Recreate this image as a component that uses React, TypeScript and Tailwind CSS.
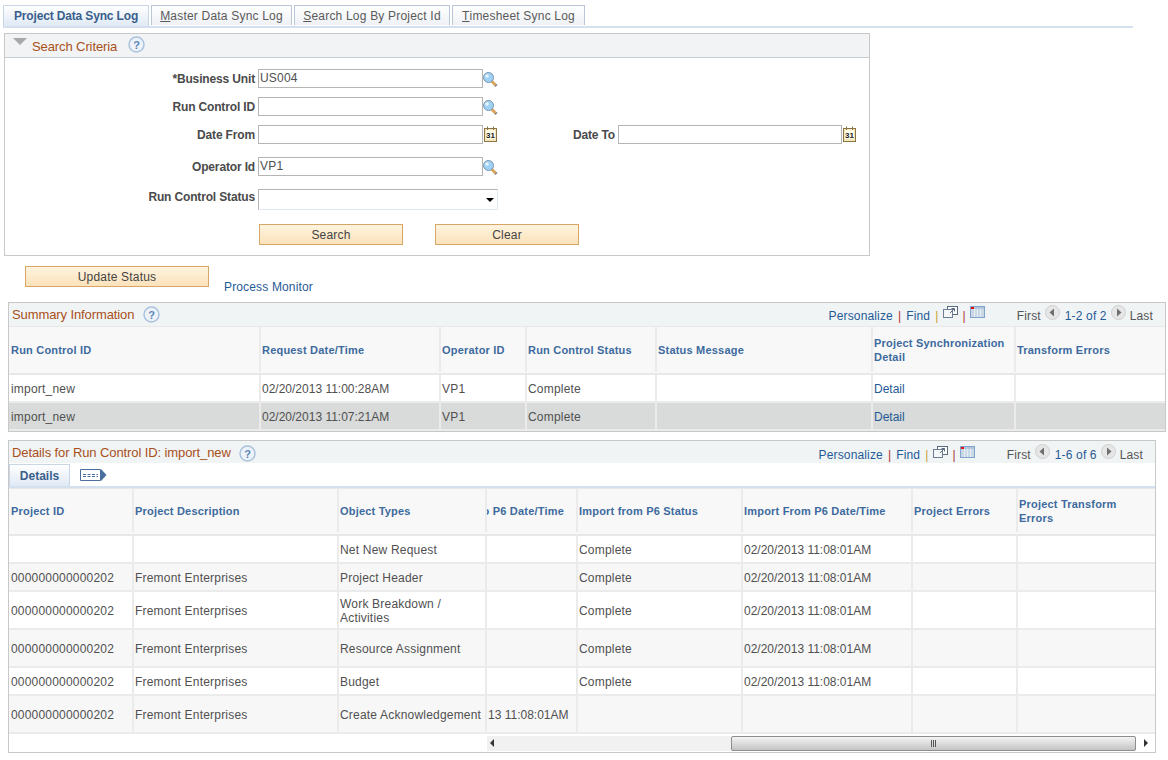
import React from "react";

const label = "text-[12px] font-bold text-[#4a4a4a] text-right tracking-[-0.15px] whitespace-nowrap";
const link = "text-[#1f5a96]";
const headCell = "flex items-center px-[1px] first:pl-[2px] text-[11px] leading-[14px] font-bold text-[#3d6a9e] tracking-[0.2px] border-r-2 border-[#ebebeb] last:border-r-0 overflow-hidden";
const bodyCell = "flex items-center px-[1px] pt-[2px] first:pl-[2px] text-[12px] leading-[14px] tracking-[0.2px] text-[#505050] border-r-2 border-[#ebebeb] last:border-r-0 overflow-hidden whitespace-nowrap";
const panelTitle = "text-[13px] tracking-[-0.1px] text-[#a8501a]";

const Lookup = () => (
  <svg width="15" height="18" viewBox="0 0 15 18">
    <line x1="8.5" y1="11" x2="13" y2="15.5" stroke="#d9a55f" strokeWidth="3" />
    <line x1="12.5" y1="15" x2="13.5" y2="16" stroke="#8a8a8a" strokeWidth="3" />
    <circle cx="5.5" cy="7.5" r="5" fill="#9fd0f5" stroke="#7d96aa" strokeWidth="1" />
    <circle cx="4" cy="6" r="1.8" fill="#e6f4fe" />
  </svg>
);

const Calendar = () => (
  <svg width="14" height="17" viewBox="0 0 14 17" className="ml-[1px]">
    <rect x="0.5" y="2.5" width="12" height="13" fill="#f5e6b8" stroke="#8a7548" />
    <rect x="2" y="4" width="9" height="9" fill="#fffbe9" />
    <line x1="3.5" y1="0.5" x2="3.5" y2="4" stroke="#8a7548" />
    <line x1="9.5" y1="0.5" x2="9.5" y2="4" stroke="#8a7548" />
    <text x="6.5" y="11.5" textAnchor="middle" fontSize="8" fontWeight="700" fill="#222" fontFamily="Liberation Sans">31</text>
  </svg>
);

const Help = () => (
  <svg width="17" height="17" viewBox="0 0 17 17">
    <circle cx="8.5" cy="8.5" r="7.5" fill="#eef3f9" stroke="#a9c2de" strokeWidth="1.5" />
    <text x="8.5" y="12.5" textAnchor="middle" fontSize="11" fontWeight="700" fill="#5b86b8" fontFamily="Liberation Sans">?</text>
  </svg>
);

const NavArrow = ({ right }: { right?: boolean }) => (
  <svg width="15" height="15" viewBox="0 0 15 15">
    <circle cx="7.5" cy="7.5" r="7" fill="#e6e6e6" stroke="#cfcfcf" />
    <path d={right ? "M6 3.5 L10.5 7.5 L6 11.5 Z" : "M9 3.5 L4.5 7.5 L9 11.5 Z"} fill="#6f6f6f" />
  </svg>
);

const NewWindow = () => (
  <svg width="15" height="12" viewBox="0 0 15 12">
    <rect x="4.5" y="0.5" width="10" height="8" fill="#fff" stroke="#5a6b80" />
    <rect x="0.5" y="3.5" width="9" height="8" fill="#f4f6f8" stroke="#6e7f94" />
    <path d="M7 7 L11.5 2.5 M8.5 2.5 H11.5 V5.5" fill="none" stroke="#5a6b80" />
  </svg>
);

const GridIcon = () => (
  <svg width="15" height="12" viewBox="0 0 15 12">
    <rect x="0.5" y="0.5" width="14" height="11" fill="#b4c6da" stroke="#7fa3cf" />
    <rect x="1" y="1" width="3" height="2" fill="#e01010" />
    <path d="M1 4 H14 M1 6 H14 M1 8 H14 M1 10 H14 M4.5 3 V11 M7.5 3 V11 M10.5 3 V11" stroke="#eef3f8" strokeWidth="0.8" />
  </svg>
);

const ShowTabs = () => (
  <svg width="27" height="14" viewBox="0 0 27 14">
    <path d="M0.5 1.5 H20.5 L20.5 12.5 H0.5 Z" fill="#fff" stroke="#4b6f9c" />
    <path d="M3 6.5 H18 M3 8.5 H18" stroke="#4b6f9c" strokeDasharray="3 1.5" />
    <path d="M21 1 L26.5 7 L21 13 Z" fill="#4b6f9c" />
  </svg>
);

const Tab = ({ text, hot, active, w }: { text: string; hot?: string; active?: boolean; w: string }) => (
  <div
    className={
      "flex items-center justify-center whitespace-nowrap text-[12px] border border-b-0 border-[#b9c6d6] " +
      w +
      (active ? " h-[21px] font-bold tracking-[-0.15px] text-[#3a5f8c] bg-gradient-to-b from-white to-[#dfe9f5] border-[#c9d6e6]" : " h-[20px] tracking-[0.2px] text-[#5a5a5a] bg-gradient-to-b from-white to-[#eef1f5] mb-[1px]")
    }
  >
    {hot && <span className="underline">{hot}</span>}
    {text}
  </div>
);

const Field = ({ value, w = "w-[225px]" }: { value?: string; w?: string }) => (
  <div className={"h-[19px] border border-[#b5b5b5] bg-white pl-[1px] text-[12px] tracking-[0.2px] leading-[17px] text-[#505050] " + w}>{value}</div>
);

const FormRow = ({ name, children, className, labelClass }: { name: string; children: React.ReactNode; className?: string; labelClass?: string }) => (
  <div className={"flex items-center " + (className ?? "")}>
    <div className={label + " w-[253px] pr-[3px] " + (labelClass ?? "")}>{name}</div>
    {children}
  </div>
);

const OrangeButton = ({ text, w }: { text: string; w: string }) => (
  <button className={"h-[21px] border border-[#d8a666] bg-gradient-to-b from-[#fff4df] to-[#fbe2bb] text-[12px] tracking-[0.2px] text-[#444444] " + w}>{text}</button>
);

const GridHeaderLinks = () => (
  <div className="flex items-center text-[12px] tracking-[0.15px] text-[#555555]">
    <span className={link}>Personalize</span>
    <span className="mx-[5px] text-[#b03030]">|</span>
    <span className={link}>Find</span>
    <span className="mx-[5px] text-[#c8a030]">|</span>
    <span className="mb-[7px]"><NewWindow /></span>
    <span className="mx-[4px] text-[#b03030]">|</span>
    <span className="mb-[7px]"><GridIcon /></span>
  </div>
);

const Pager = ({ range }: { range: string }) => (
  <div className="flex items-center text-[12px] tracking-[0.15px] text-[#555555] ml-[32px]">
    <span>First</span>
    <span className="ml-[4px] mr-[5px] mb-[7px]"><NavArrow /></span>
    <span className={link}>{range}</span>
    <span className="mx-[4px] mb-[7px]"><NavArrow right /></span>
    <span>Last</span>
  </div>
);

const summaryCols = "grid-cols-[252px_180px_86px_130px_216px_143px_1fr]";
const summaryHead = ["Run Control ID", "Request Date/Time", "Operator ID", "Run Control Status", "Status Message", "Project Synchronization Detail", "Transform Errors"];
const summaryRows = [
  ["import_new", "02/20/2013 11:00:28AM", "VP1", "Complete", "", "Detail", ""],
  ["import_new", "02/20/2013 11:07:21AM", "VP1", "Complete", "", "Detail", ""],
];

const detailCols = "grid-cols-[125px_205px_148px_91px_165px_170px_105px_1fr]";
const detailHead = ["Project ID", "Project Description", "Object Types", "to P6 Date/Time", "Import from P6 Status", "Import From P6 Date/Time", "Project Errors", "Project Transform Errors"];
const id = "000000000000202";
const fe = "Fremont Enterprises";
const when = "02/20/2013 11:08:01AM";
const detailRows = [
  { h: "h-[28px]", c: ["", "", "Net New Request", "", "Complete", when, "", ""] },
  { h: "h-[28px]", c: [id, fe, "Project Header", "", "Complete", when, "", ""] },
  { h: "h-[38px]", c: [id, fe, "Work Breakdown / Activities", "", "Complete", when, "", ""] },
  { h: "h-[38px]", c: [id, fe, "Resource Assignment", "", "Complete", when, "", ""] },
  { h: "h-[28px]", c: [id, fe, "Budget", "", "Complete", when, "", ""] },
  { h: "h-[38px]", c: [id, fe, "Create Acknowledgement", "13 11:08:01AM", "", "", "", ""] },
];

const timeCell = (c: string) => (c.includes(":") ? " !tracking-[0px]" : "");

export default function App() {
  return (
    <div className="w-[1168px] h-[760px] overflow-hidden bg-white pt-[5px] font-['Liberation_Sans',Arial,sans-serif]">
      {/* page tabs */}
      <div className="ml-[3px] w-[1130px] flex gap-[2px] items-end border-b-2 border-[#d5e0ee]">
        <Tab text="Project Data Sync Log" active w="w-[146px]" />
        <Tab hot="M" text="aster Data Sync Log" w="w-[141px]" />
        <Tab hot="S" text="earch Log By Project Id" w="w-[156px]" />
        <Tab hot="T" text="imesheet Sync Log" w="w-[133px]" />
      </div>
      <div className="ml-[4px] mt-[5px] w-[866px] h-[223px] border border-[#c8c8c8]">
        <div className="h-[24px] flex items-center bg-[#f1f3f4] border-b border-[#c8cdd2] pl-[8px]">
          <div className="mb-[9px] w-0 h-0 border-l-[7px] border-r-[7px] border-t-[7px] border-l-transparent border-r-transparent border-t-[#a8a8a8]" />
          <span className={panelTitle + " ml-[5px] mt-[2px]"}>Search Criteria</span>
          <span className="ml-[11px] mb-[3px]"><Help /></span>
        </div>
        <div className="pt-[11px]">
          <FormRow name="*Business Unit"><Field value="US004" /><Lookup /></FormRow>
          <FormRow name="Run Control ID" className="mt-[9px]"><Field /><Lookup /></FormRow>
          <FormRow name="Date From" className="mt-[9px]">
            <Field /><Calendar />
            <div className={label + " w-[120px] pr-[3px]"}>Date To</div>
            <Field w="w-[224px]" /><Calendar />
          </FormRow>
          <FormRow name="Operator Id" className="mt-[13px]"><Field value="VP1" /><Lookup /></FormRow>
          <FormRow name="Run Control Status" className="mt-[12px]" labelClass="pb-[4px]">
            <div className="w-[240px] h-[21px] border border-[#b5b5b5] border-r-[#dfe7f0] border-b-[#dfe7f0] bg-white relative">
              <div className="absolute right-[3px] top-[8px] w-0 h-0 border-l-[4px] border-r-[4px] border-t-[4px] border-l-transparent border-r-transparent border-t-black" />
            </div>
          </FormRow>
          <div className="flex gap-[32px] mt-[14px] ml-[254px]">
            <OrangeButton text="Search" w="w-[144px]" />
            <OrangeButton text="Clear" w="w-[144px]" />
          </div>
        </div>
      </div>

      <div className="flex items-start ml-[25px] mt-[10px]">
        <OrangeButton text="Update Status" w="w-[184px]" />
        <span className={link + " ml-[15px] mt-[14px] text-[12px] tracking-[0.15px] leading-[14px]"}>Process Monitor</span>
      </div>

      {/* summary grid */}
      <div className="ml-[8px] mt-[8px] w-[1158px] border border-[#c8c8c8] h-[130px]">
        <div className="h-[23px] bg-[#f1f4f5] flex items-center pl-[3px] pr-[12px]">
          <span className={panelTitle}>Summary Information</span>
          <span className="ml-[9px]"><Help /></span>
          <div className="ml-auto flex items-center pt-[2px]"><GridHeaderLinks /><Pager range="1-2 of 2" /></div>
        </div>
        <div className={"grid h-[49px] pb-[1px] bg-[#f8f8f8] border-b-2 border-t border-[#e8e8e8] " + summaryCols}>
          {summaryHead.map((h) => <div key={h} className={headCell}>{h}</div>)}
        </div>
        {summaryRows.map((r, i) => (
          <div key={i} className={"grid h-[28px] border-b-2 border-[#ebebeb] " + summaryCols + (i === 1 ? " bg-[#d8dbd9]" : " bg-white")}>
            {r.map((c, j) => (
              <div key={j} className={bodyCell + timeCell(c) + (i === 1 ? " border-[#c9cccb]" : "") + (c === "Detail" ? " !text-[#1f5a96] !tracking-normal" : "")}>{c}</div>
            ))}
          </div>
        ))}
      </div>

      {/* details grid */}
      <div className="ml-[8px] mt-[8px] w-[1148px] border border-[#c8c8c8] h-[313px]">
        <div className="h-[22px] bg-[#f1f4f5] flex items-center pl-[3px] pr-[12px]">
          <span className={panelTitle + " mt-[2px]"}>Details for Run Control ID: import_new</span>
          <span className="ml-[8px] mt-[2px]"><Help /></span>
          <div className="ml-auto flex items-center pt-[6px]"><GridHeaderLinks /><Pager range="1-6 of 6" /></div>
        </div>
        <div className="h-[25px] flex items-end border-b-2 border-[#d5e0ee]">
          <div className="w-[61px] h-[22px] pt-[1px] flex items-center justify-center text-[12px] font-bold text-[#3a5f8c] border border-b-0 border-[#c9d6e6] bg-gradient-to-b from-white to-[#dfe9f5]">Details</div>
          <span className="ml-[10px] mb-[4px]"><ShowTabs /></span>
        </div>
        <div className={"grid h-[48px] pb-[2px] bg-[#f8f8f8] border-b-2 border-t border-[#e8e8e8] " + detailCols}>
          {detailHead.map((h, j) => (
            <div key={h} className={headCell + (j === 3 ? " justify-end !pr-[12px] whitespace-nowrap" : "") + (j === 7 ? " !pr-[12px]" : "")}>{h}</div>
          ))}
        </div>
        {detailRows.map((r, i) => (
          <div key={i} className={"grid border-b-2 border-[#ebebeb] " + r.h + " " + detailCols + (i % 2 ? " bg-[#f7f7f7]" : " bg-white")}>
            {r.c.map((c, j) => (
              <div key={j} className={bodyCell + timeCell(c) + (j === 2 ? " !whitespace-normal" : "")}>{c}</div>
            ))}
          </div>
        ))}
        {/* horizontal scrollbar */}
        <div className="flex items-center h-[17px] pl-[478px] pt-[1px]">
          <div className="flex-1 h-[15px] flex items-center bg-[#f1f1f1] relative">
            <div className="w-0 h-0 ml-[3px] border-y-[4px] border-r-[4px] border-y-transparent border-r-[#333333]" />
            <div className="absolute left-[244px] top-0 w-[405px] h-[15px] rounded-[2px] border border-[#8e8e8e] bg-gradient-to-b from-[#f4f4f4] to-[#c4c4c4] flex items-center justify-center">
              <div className="w-[5px] h-[7px] border-x border-[#555555] relative"><div className="absolute left-[1px] top-0 w-px h-[7px] bg-[#555555]" /></div>
            </div>
          </div>
          <div className="w-[19px] h-[15px] flex items-center justify-center">
            <div className="w-0 h-0 border-y-[4px] border-l-[4px] border-y-transparent border-l-[#333333]" />
          </div>
        </div>
      </div>
    </div>
  );
}
